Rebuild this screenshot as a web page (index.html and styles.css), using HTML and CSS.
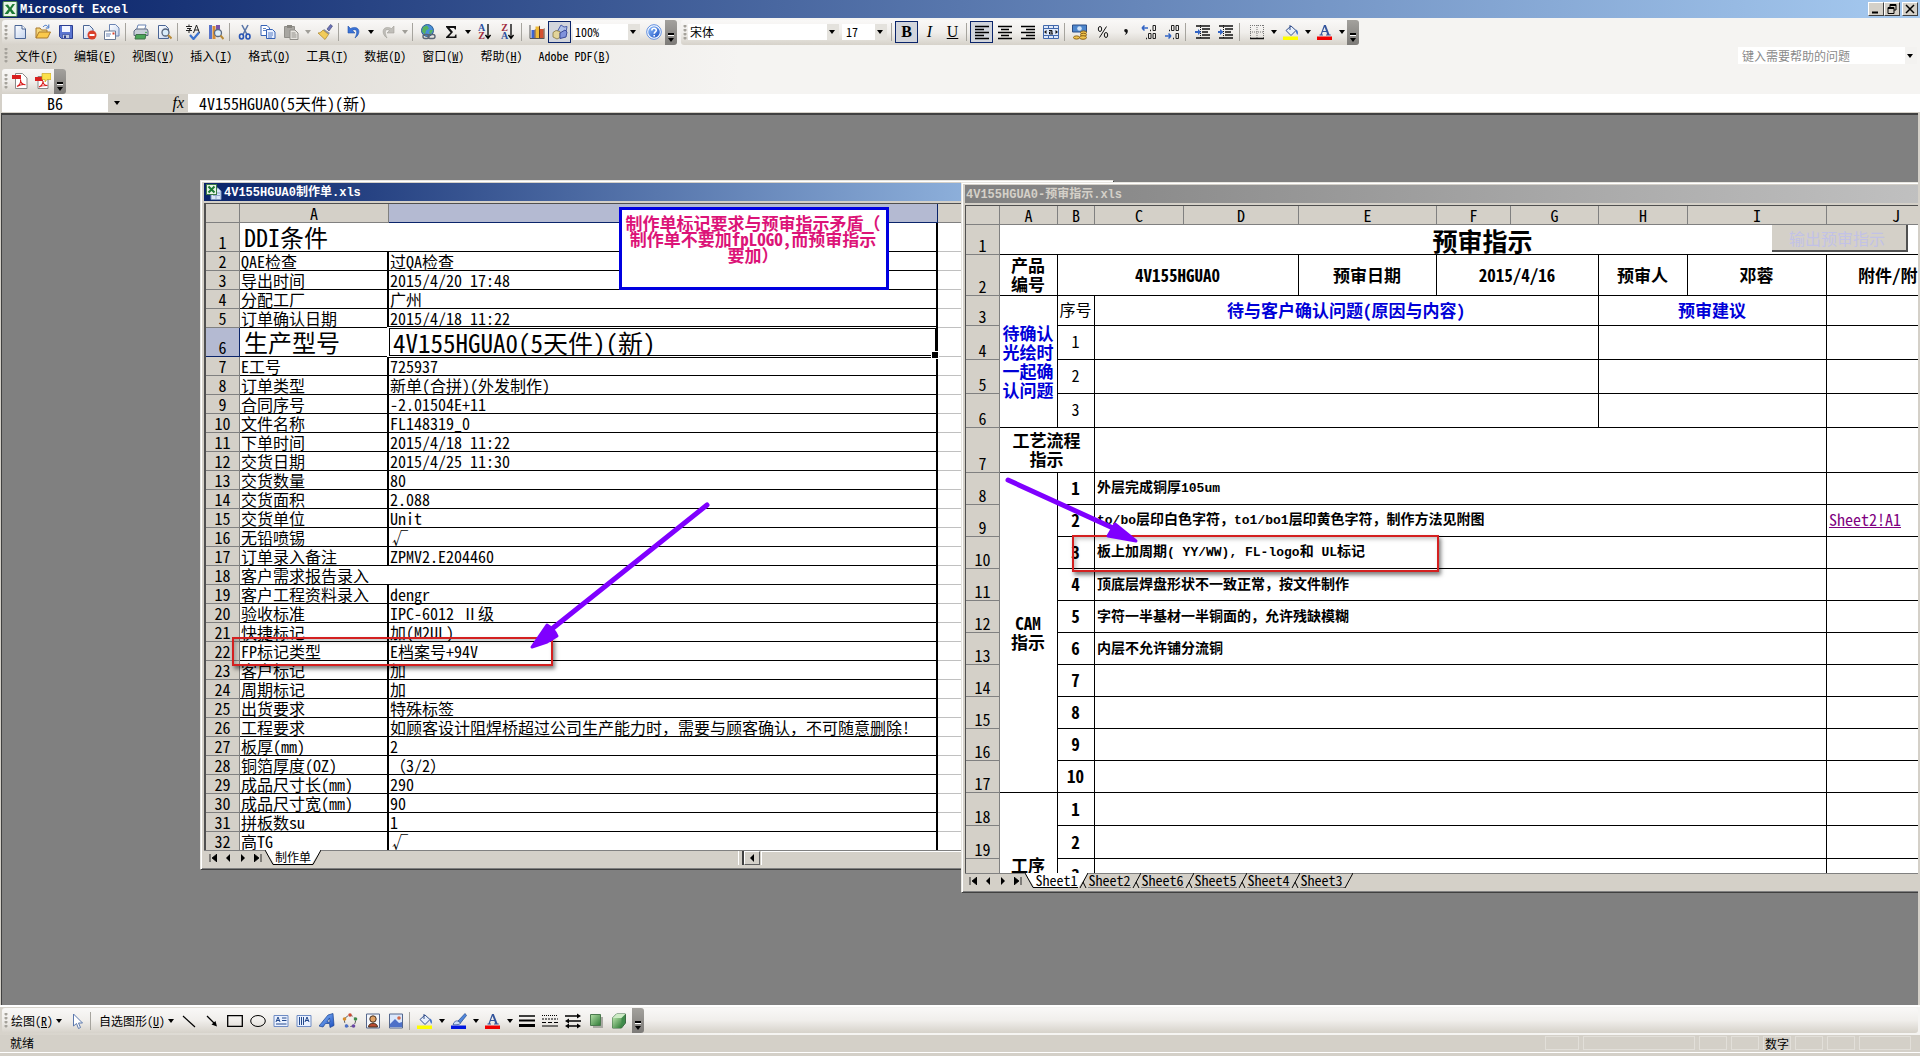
FILE: index.html
```html
<!DOCTYPE html>
<html lang="zh-CN">
<head>
<meta charset="utf-8">
<title>Microsoft Excel</title>
<link rel="stylesheet" href="styles.css">
</head>
<body>
<svg class="defs" aria-hidden="true">
<defs>
<linearGradient id="page" x2="1" y2="1"><stop offset="0" stop-color="#fff"/><stop offset="1" stop-color="#c3d3ee"/></linearGradient>
<linearGradient id="green" x2="1" y2="1"><stop offset="0" stop-color="#b5e0a8"/><stop offset="1" stop-color="#2d7a35"/></linearGradient>
<linearGradient id="blue" x2="1" y2="1"><stop offset="0" stop-color="#8fc0ff"/><stop offset="1" stop-color="#1c4fc0"/></linearGradient>
<symbol id="i-excel" viewBox="0 0 16 16"><rect x="1" y=".5" width="14" height="15" rx="1" fill="#e9f4e6" stroke="#3d7a45"/><path d="M3 4l3-.5 2 3 2.500-3.500H13L9.500 8l4 5h-3.500L8 10l-2 3H2.500L6.500 8z" fill="#1d7a34"/></symbol>
<symbol id="i-book" viewBox="0 0 16 16"><path d="M5 4h7l3 3v8.500H5z" fill="#dbe6f8" stroke="#7d94bd"/><path d="M7 9h7M7 11.500h7M10 7v8" stroke="#93a9cf"/><rect x=".5" y=".5" width="10" height="10" fill="#e9f4e6" stroke="#3d7a45"/><path d="M2.500 2.500l6 6m0-6l-6 6" stroke="#1d7a34" stroke-width="2"/></symbol>
<symbol id="i-new" viewBox="0 0 16 16"><path d="M3 1.500h7l3.500 3.500v9.500H3z" fill="url(#page)" stroke="#4a6595"/><path d="M10 1.500V5h3.500" fill="#fff" stroke="#4a6595"/></symbol>
<symbol id="i-open" viewBox="0 0 16 16"><path d="M1 14V4h4l1.500 2H12v3" fill="#f5d77a" stroke="#a9782a"/><path d="M1 14l3-6h11.500l-3 6z" fill="#fbc94b" stroke="#a9782a"/><path d="M8 3c2-2.500 4-2 5 0m.8-2.500V4h-3" fill="none" stroke="#3b6fc4"/></symbol>
<symbol id="i-save" viewBox="0 0 16 16"><path d="M1.500 1.500h13v13h-11l-2-2z" fill="#5b75d0" stroke="#2c3f91"/><path d="M4 2h8v6H4z" fill="#f3f6ff"/><path d="M4.500 10.500h7v4h-7z" fill="#c3cbe0" stroke="#2c3f91" stroke-width=".6"/><path d="M6 11.500h2V14H6z" fill="#2c3f91"/></symbol>
<symbol id="i-perm" viewBox="0 0 16 16"><path d="M2.500 1.500h6l3.500 3.500v9.500H2.500z" fill="url(#page)" stroke="#4a6595"/><circle cx="11" cy="11" r="4.500" fill="#d9402a"/><path d="M8.500 10h5v2h-5z" fill="#fff"/></symbol>
<symbol id="i-mail" viewBox="0 0 16 16"><path d="M5.500.500h6L15 4v8H5.500z" fill="url(#page)" stroke="#6b84b3"/><path d="M.5 7h11v8.500H.5z" fill="#fff" stroke="#6b7a95"/><path d="M2 10h5M2 12h4" stroke="#6b84b3"/><path d="M8.500 8.500h2v2h-2z" fill="#d9402a"/></symbol>
<symbol id="i-print" viewBox="0 0 16 16"><path d="M5 1h8l-1.500 5h-8z" fill="#fff" stroke="#6b84b3"/><path d="M1 7l2-2h11l1 2v4.500H1z" fill="#c9cfd9" stroke="#5d6b82"/><path d="M3 10.500h10l-1 4.500H2z" fill="#4ba658" stroke="#40704a"/><circle cx="13" cy="8.500" r=".8" fill="#2ea836"/></symbol>
<symbol id="i-preview" viewBox="0 0 16 16"><path d="M2.500 1.500h7l3 3v10h-10z" fill="url(#page)" stroke="#4a6595"/><circle cx="9.500" cy="8.500" r="3.500" fill="#d9ecfa" stroke="#56657d" stroke-width="1.300"/><path d="M12 11l3.500 3.500" stroke="#b98a37" stroke-width="2"/></symbol>
<symbol id="i-spell" viewBox="0 0 16 16"><path d="M1 2.500h6M4 .5v2M2 4.500h4L4 6v3M1 6.500h6M8.500 9L11.500 1 14.500 9M9.500 6h4" fill="none" stroke="#222"/><path d="M5 11l3.500 4L14 8.500" fill="none" stroke="#3c73cf" stroke-width="2.200"/></symbol>
<symbol id="i-research" viewBox="0 0 16 16"><path d="M1 1h3v14H1z" fill="#5873c9"/><path d="M4.500 2h3v13h-3z" fill="#d58b35"/><path d="M8 1h4v9H8z" fill="#7a53a8"/><circle cx="10" cy="9" r="3.500" fill="#dceefa" stroke="#5c6b83" stroke-width="1.300"/><path d="M12.500 11.500l3 3.500" stroke="#b98a37" stroke-width="2"/></symbol>
<symbol id="i-cut" viewBox="0 0 16 16"><path d="M5 1l5 9.500M11 1L6 10.500" stroke="#5b76a8" stroke-width="1.600"/><ellipse cx="4.500" cy="12.500" rx="2" ry="2.500" fill="none" stroke="#2754b5" stroke-width="1.600"/><ellipse cx="11" cy="12.500" rx="2" ry="2.500" fill="none" stroke="#2754b5" stroke-width="1.600"/></symbol>
<symbol id="i-copy" viewBox="0 0 16 16"><path d="M1 1.500h6L9.500 4v7.500H1z" fill="#fff" stroke="#3763b5"/><path d="M6.500 5.500h6l2.500 2.500v6.500H6.500z" fill="#e8f0ff" stroke="#3763b5"/><path d="M3 4.500h3M3 6.500h3M8 9h5M8 11h5M8 13h4" stroke="#3763b5" stroke-width=".8"/></symbol>
<symbol id="i-paste" viewBox="0 0 16 16"><path d="M1.500 2.500h10v11h-10z" fill="#a8a6a1" stroke="#908e89"/><path d="M4 1h5v3H4z" fill="#87857f"/><path d="M7 6h5l3 3v6.500H7z" fill="#e6e4df" stroke="#908e89"/><path d="M8.500 9h4M8.500 11h5M8.500 13h5" stroke="#908e89"/></symbol>
<symbol id="i-brush" viewBox="0 0 16 16"><path d="M10 5l3.500-4.500L15.500 2 12 7z" fill="#6a72b8" stroke="#3a4270" stroke-width=".6"/><path d="M7 5l6 4-1.500 1.500L6 6.500z" fill="#8d93a5"/><path d="M6 6l5.500 4.500L8 15.500 1 9c2 0 4-1.500 5-3z" fill="#f2cc5a" stroke="#a98228" stroke-width=".7"/></symbol>
<symbol id="i-undo" viewBox="0 0 16 16"><path d="M2 2v7h7L6.500 6.500C10 4 12.500 7 9 14 16 9 13 .5 4.500 4.500z" fill="#3a73d8" stroke="#2353a8" stroke-width=".6"/></symbol>
<symbol id="i-redo" viewBox="0 0 16 16"><path d="M14 2v7H7l2.500-2.500C6 4 3.500 7 7 14 0 9 3 .5 11.500 4.500z" fill="#c0beb9" stroke="#a19f99" stroke-width=".6"/></symbol>
<symbol id="i-link" viewBox="0 0 16 16"><circle cx="7.500" cy="6.500" r="6" fill="#4a8fd8" stroke="#2d5f93"/><path d="M3 3l4-1.500 2 3-3 2-1 4-3-3zM10 6l3 0-2 4-2-1z" fill="#57b35d"/><rect x="3" y="10.500" width="6" height="4" rx="2" fill="none" stroke="#5b6675" stroke-width="1.400"/><rect x="8" y="10.500" width="7" height="4" rx="2" fill="none" stroke="#5b6675" stroke-width="1.400"/></symbol>
<symbol id="i-sum" viewBox="0 0 16 16"><path d="M3 2h10v3.500h-1L11 4H6.500L10 8l-4 4.500h5.500l1-2h1V14H3v-1L7.500 8.500 3 3z" fill="#111"/></symbol>
<symbol id="i-chart" viewBox="0 0 16 16"><path d="M1 1v13.500h14.500" fill="none" stroke="#555"/><path d="M2.500 6h3v8h-3z" fill="#3c65cf"/><path d="M6.500 2.500h3.500V14H6.500z" fill="#f0bb36"/><path d="M11 5h3.500v9H11z" fill="#d45030"/><path d="M5.500 6l1-1v9h-1zM10 2.500l1-1V14h-1zM14.500 5l1-1v10h-1z" fill="#653a20"/></symbol>
<symbol id="i-draw" viewBox="0 0 16 16"><path d="M5 8l4-7 3 2 3-.5-1 6-5 2z" fill="#aebfe8" stroke="#4a5da8"/><path d="M1 8.500l3-2 4 1v6l-3 1.500-4-2z" fill="#e3d49a" stroke="#7a6a30" stroke-width=".7"/><path d="M8 9l5-3 2 2-1 5-6 1.500z" fill="#7f92dc" stroke="#3a4a98"/></symbol>
<symbol id="i-help" viewBox="0 0 16 16"><circle cx="8" cy="8" r="7.300" fill="#fff" stroke="#5d8ce0"/><circle cx="8" cy="8" r="5.800" fill="url(#blue)"/><path d="M5.800 6.500C5.800 3.500 10.500 3.600 10.300 6.300 10.200 8 8.200 8 8.200 9.800M8.200 11v1.500" fill="none" stroke="#fff" stroke-width="1.600"/></symbol>
<symbol id="i-left" viewBox="0 0 16 16"><path d="M1 2.500h14M1 5.500h9M1 8.500h14M1 11.500h9M1 14.500h14" stroke="#000" stroke-width="1.300"/></symbol>
<symbol id="i-center" viewBox="0 0 16 16"><path d="M1 2.500h14M4 5.500h8M1 8.500h14M4 11.500h8M1 14.500h14" stroke="#000" stroke-width="1.300"/></symbol>
<symbol id="i-right" viewBox="0 0 16 16"><path d="M1 2.500h14M6 5.500h9M1 8.500h14M6 11.500h9M1 14.500h14" stroke="#000" stroke-width="1.300"/></symbol>
<symbol id="i-merge" viewBox="0 0 16 16"><path d="M.5 1.500h15v13H.5z" fill="#dfe9fa" stroke="#4268ab"/><path d="M.5 4.500h15M.5 11.500h15M5.500 1.500v3M10.500 1.500v3M5.500 11.500v3M10.500 11.500v3" stroke="#4268ab"/><path d="M1 8l2.500-2v4zM15 8l-2.500-2v4z" fill="#111"/><path d="M6 6.500h3v3.500H6.500V8H9m0 2h1" fill="none" stroke="#111"/></symbol>
<symbol id="i-money" viewBox="0 0 16 16"><path d="M.5 1h14v7H.5z" fill="#4d86cc" stroke="#2c4e87"/><circle cx="7.500" cy="4.500" r="2.300" fill="#cfe2f7"/><ellipse cx="11.500" cy="8.500" rx="3" ry="1.600" fill="#f0c34b" stroke="#8e6414"/><ellipse cx="11.500" cy="10.800" rx="3" ry="1.600" fill="#f0c34b" stroke="#8e6414"/><ellipse cx="11" cy="13.500" rx="3.500" ry="1.800" fill="#f0c34b" stroke="#8e6414"/><ellipse cx="4.500" cy="13.500" rx="3" ry="1.600" fill="#f0c34b" stroke="#8e6414"/></symbol>
<symbol id="i-pct" viewBox="0 0 16 16"><ellipse cx="5" cy="5" rx="1.700" ry="2.500" fill="none" stroke="#111"/><ellipse cx="11" cy="11" rx="1.700" ry="2.500" fill="none" stroke="#111"/><path d="M11.500 2.500L4.500 13.500" stroke="#111"/></symbol>
<symbol id="i-comma" viewBox="0 0 16 16"><path d="M6.500 5.500c1.500-1.500 4 0 3.200 2.500-.5 1.800-1.700 2.800-3 3.200 1-1.200 1.300-2 1.200-2.800C6.500 8.500 5.800 6.500 6.500 5.500z" fill="#111"/></symbol>
<symbol id="i-inc" viewBox="0 0 16 16"><path d="M1 4h6M1 4l2.500-2.500M1 4l2.500 2.500" fill="none" stroke="#3365c5" stroke-width="1.500"/><path d="M9 6.500h1M5 14.500h1" stroke="#222" stroke-width="1.500"/><path d="M12 1.500h2.500v5H12zM7.500 9.500H10v5H7.500zM12 9.500h2.500v5H12z" fill="none" stroke="#222"/></symbol>
<symbol id="i-dec" viewBox="0 0 16 16"><path d="M1 12h6M7 12l-2.500-2.500M7 12l-2.500 2.500" fill="none" stroke="#3365c5" stroke-width="1.500"/><path d="M9 14.500h1M5 6.500h1" stroke="#222" stroke-width="1.500"/><path d="M12 9.500h2.500v5H12zM7.500 1.500H10v5H7.500zM12 1.500h2.500v5H12z" fill="none" stroke="#222"/></symbol>
<symbol id="i-outdent" viewBox="0 0 16 16"><path d="M1 2h14M7 5h8M7 8h6M7 11h8M1 14h14" stroke="#111" stroke-width="1.500"/><path d="M5.500 1v14" stroke="#111" stroke-dasharray="1 1"/><path d="M6 8L3 5v2H0v2h3v2z" fill="#3365c5"/></symbol>
<symbol id="i-indent" viewBox="0 0 16 16"><path d="M1 2h14M7 5h8M7 8h6M7 11h8M1 14h14" stroke="#111" stroke-width="1.500"/><path d="M5.500 1v14" stroke="#111" stroke-dasharray="1 1"/><path d="M0 7h2V5l3.500 3L2 11V9H0z" fill="#3365c5"/></symbol>
<symbol id="i-border" viewBox="0 0 16 16"><path d="M1.500 1v13M8 1v13M14.500 1v13M1 1.500h14M1 8h14" stroke="#777" stroke-dasharray="1 1"/><path d="M1 14.500h14" stroke="#111" stroke-width="1.500"/></symbol>
<symbol id="i-fill" viewBox="0 0 16 16"><path d="M3 6.500L8 2l5 4.500-5 5z" fill="#e7effb" stroke="#35508c"/><path d="M7 6V1" stroke="#35508c"/><path d="M13 5.500c2 1 2.500 3 1.500 5.500-1-1-2-3-1.500-5.500z" fill="#3f74cf"/><path d="M0 12.500h15V16H0z" fill="#fefe00"/></symbol>
<symbol id="i-color" viewBox="0 0 16 16"><path d="M2.500 10.500h1L7 1h1.800l3.700 9.500h1.200v1H9v-1h1.200L9.400 8H5.700l-.9 2.500H6v1H2.500zM6 7h3L7.600 3z" fill="#34559c"/><path d="M0 12.500h15V16H0z" fill="#f00000"/></symbol>
<symbol id="i-pen" viewBox="0 0 16 16"><path d="M7 8l7-7.500 1.500 2L9.500 10z" fill="#4f86dc" stroke="#23498c" stroke-width=".7"/><path d="M2 11.500c1-3 3-4 5-3.500l2.500 2c0 1.500-4 2-7.500 1.500z" fill="#c9dcf8" stroke="#23498c" stroke-width=".7"/><path d="M0 12.500h15V16H0z" fill="#0018e0"/></symbol>
<symbol id="i-pdf" viewBox="0 0 16 16"><path d="M3.500.500h7L15 5v10.500H3.500z" fill="#fff" stroke="#888"/><path d="M0 2h9v4H0z" fill="#d91f1f"/><path d="M5 13.500c3-2 4-5 3.500-7 0 3 2 5 5 5.200-3-.5-6 .3-8.500 1.800z" fill="none" stroke="#d91f1f" stroke-width="1.100"/></symbol>
<symbol id="i-pdfmail" viewBox="0 0 16 16"><path d="M3 3.500h10v12H3z" fill="#fff" stroke="#888"/><path d="M0 4h8v4H0z" fill="#d91f1f"/><path d="M7 .5h9v6h-4L10 9V6.500H7z" fill="#fbe04a" stroke="#c19c12" stroke-width=".6"/><path d="M4 14c3-1.500 4-4 4-6 0 3 2 4.500 4.500 4.500-3 0-6 0-8.500 1.500z" fill="none" stroke="#d91f1f" stroke-width="1.100"/></symbol>
<symbol id="i-cursor" viewBox="0 0 16 16"><path d="M4.500 1v12l3-2.500 2 5 2-1-2-4.500h4z" fill="#fff" stroke="#5b78ad"/></symbol>
<symbol id="i-line" viewBox="0 0 16 16"><path d="M2 3l12 11" stroke="#000" stroke-width="1.200"/></symbol>
<symbol id="i-arrow" viewBox="0 0 16 16"><path d="M3 3l8 8" stroke="#000" stroke-width="1.300"/><path d="M13 13.500L7.500 11.500 11.500 8z" fill="#000"/></symbol>
<symbol id="i-rect" viewBox="0 0 16 16"><path d="M.7 2.700h14.600v10.600H.7z" fill="none" stroke="#000" stroke-width="1.300"/></symbol>
<symbol id="i-oval" viewBox="0 0 16 16"><ellipse cx="8" cy="8" rx="7.300" ry="5.500" fill="none" stroke="#000"/></symbol>
<symbol id="i-text" viewBox="0 0 16 16"><path d="M1 2.500h14v11H1z" fill="#eaf1ff" stroke="#6f8cc4"/><path d="M3 9l2-5 2 5M3.500 7.500h3M9 5h4.500M9 7.500h4.500M3 11h10.500" fill="none" stroke="#23498c"/></symbol>
<symbol id="i-vtext" viewBox="0 0 16 16"><path d="M1 2.500h14v11H1z" fill="#eaf1ff" stroke="#6f8cc4"/><path d="M3.500 4v8M5.500 4v8M7.500 4v8M9 9l2-5 2 5M9.500 7.500h3" fill="none" stroke="#23498c"/></symbol>
<symbol id="i-art" viewBox="0 0 16 16"><path d="M0 13l9-11 5-1.500 1 12-4 2-.5-4H6.500L4 14zM8 9h3l-.5-4z" fill="url(#blue)" stroke="#17408f" stroke-width=".7"/></symbol>
<symbol id="i-org" viewBox="0 0 16 16"><circle cx="8" cy="8" r="5.500" fill="none" stroke="#555" stroke-dasharray="3 2"/><circle cx="8" cy="2" r="1.800" fill="#c94b36"/><circle cx="2.500" cy="6" r="1.800" fill="#d68c2c"/><circle cx="13.500" cy="6" r="1.800" fill="#3f8b4b"/><circle cx="4.500" cy="13" r="1.800" fill="#4d70c8"/><circle cx="11.500" cy="13" r="1.800" fill="#6846a4"/></symbol>
<symbol id="i-clip" viewBox="0 0 16 16"><path d="M1.500 1h13v14h-13z" fill="#f4f6fb" stroke="#54678d"/><circle cx="8" cy="6" r="3.200" fill="#e0a165" stroke="#473020"/><path d="M3.500 14c0-5 9-5 9 0z" fill="#b94a2f" stroke="#473020"/></symbol>
<symbol id="i-pic" viewBox="0 0 16 16"><path d="M1.500 1h13v14h-13z" fill="#dbe8fc" stroke="#54678d"/><path d="M2 14V11l5-5 4 4 3-1v5z" fill="#4d70c8"/><circle cx="11" cy="5" r="1.800" fill="#d2694a"/></symbol>
<symbol id="i-lines" viewBox="0 0 16 16"><path d="M0 3h16" stroke="#000" stroke-width="1.500"/><path d="M0 7.500h16" stroke="#000" stroke-width="2"/><path d="M0 12.500h16" stroke="#000" stroke-width="3"/></symbol>
<symbol id="i-dash" viewBox="0 0 16 16"><path d="M0 2.500h16" stroke="#000" stroke-dasharray="1 1"/><path d="M0 6h16" stroke="#000" stroke-dasharray="2 1"/><path d="M0 9.500h16" stroke="#000" stroke-dasharray="4 2"/><path d="M0 13h16" stroke="#000"/></symbol>
<symbol id="i-arrows" viewBox="0 0 16 16"><path d="M0 3h13M3 8h13M3 13h10" stroke="#000" stroke-width="1.300"/><path d="M16 3l-4-2.500v5zM0 8l4-2.500v5zM0 13l4-2.500v5zM16 13l-4-2.500v5z"/></symbol>
<symbol id="i-shadow" viewBox="0 0 16 16"><path d="M5 4h10v11H5z" fill="#a9a9a3"/><path d="M2.500 1.500h10v11h-10z" fill="url(#green)" stroke="#4a7a4e"/></symbol>
<symbol id="i-cube" viewBox="0 0 16 16"><path d="M1.500 5l4-4h9v9l-4 5h-9z" fill="#3f8b4b" stroke="#3c6b42"/><path d="M1.500 5h9v10h-9z" fill="url(#green)"/><path d="M1.500 5l4-4h9l-4 4z" fill="#cdebc5"/></symbol>
</defs>
</svg>

<header class="titlebar">
  <svg class="ico"><use href="#i-excel"/></svg>
  <h1>Microsoft Excel</h1>
  <div class="winbtns">
    <button aria-label="最小化"><svg viewBox="0 0 10 10"><path d="M1 8.500h6" stroke="#000" stroke-width="2"/></svg></button>
    <button aria-label="还原"><svg viewBox="0 0 10 10"><path d="M3 3V.5h6V6H7M3 1.500h6M1 3.500h6v6H1zM1 4.500h6" fill="none" stroke="#000"/></svg></button>
    <button class="close" aria-label="关闭"><svg viewBox="0 0 10 10"><path d="M1 1l8 8M9 1L1 9" stroke="#000" stroke-width="1.500"/></svg></button>
  </div>
</header>

<div class="bars">
  <div class="row">
    <div class="toolbar">
      <i class="grip"></i>
      <button class="tb" aria-label="新建"><svg class="ico"><use href="#i-new"/></svg></button>
      <button class="tb" aria-label="打开"><svg class="ico"><use href="#i-open"/></svg></button>
      <button class="tb" aria-label="保存"><svg class="ico"><use href="#i-save"/></svg></button>
      <button class="tb" aria-label="权限"><svg class="ico"><use href="#i-perm"/></svg></button>
      <button class="tb" aria-label="电子邮件"><svg class="ico"><use href="#i-mail"/></svg></button>
      <i class="sep"></i>
      <button class="tb" aria-label="打印"><svg class="ico"><use href="#i-print"/></svg></button>
      <button class="tb" aria-label="打印预览"><svg class="ico"><use href="#i-preview"/></svg></button>
      <i class="sep"></i>
      <button class="tb" aria-label="拼写检查"><svg class="ico"><use href="#i-spell"/></svg></button>
      <button class="tb" aria-label="信息检索"><svg class="ico"><use href="#i-research"/></svg></button>
      <i class="sep"></i>
      <button class="tb" aria-label="剪切"><svg class="ico"><use href="#i-cut"/></svg></button>
      <button class="tb" aria-label="复制"><svg class="ico"><use href="#i-copy"/></svg></button>
      <button class="tb" aria-label="粘贴"><svg class="ico"><use href="#i-paste"/></svg></button>
      <button class="drop off" aria-label="粘贴选项"></button>
      <button class="tb" aria-label="格式刷"><svg class="ico"><use href="#i-brush"/></svg></button>
      <i class="sep"></i>
      <button class="tb" aria-label="撤消"><svg class="ico"><use href="#i-undo"/></svg></button>
      <button class="drop" aria-label="撤消列表"></button>
      <button class="tb" aria-label="恢复"><svg class="ico"><use href="#i-redo"/></svg></button>
      <button class="drop off" aria-label="恢复列表"></button>
      <i class="sep"></i>
      <button class="tb" aria-label="超链接"><svg class="ico"><use href="#i-link"/></svg></button>
      <button class="tb" aria-label="自动求和"><svg class="ico"><use href="#i-sum"/></svg></button>
      <button class="drop" aria-label="求和选项"></button>
      <button class="tb sort" aria-label="升序排序"><span><b class="az">A</b><b class="za">Z</b></span><svg viewBox="0 0 6 16"><path d="M3 0v14M.5 11L3 14.500 5.500 11" fill="none" stroke="#000" stroke-width="1.300"/></svg></button>
      <button class="tb sort" aria-label="降序排序"><span><b class="za">Z</b><b class="az">A</b></span><svg viewBox="0 0 6 16"><path d="M3 0v14M.5 11L3 14.500 5.500 11" fill="none" stroke="#000" stroke-width="1.300"/></svg></button>
      <i class="sep"></i>
      <button class="tb" aria-label="图表向导"><svg class="ico"><use href="#i-chart"/></svg></button>
      <button class="tb on" aria-label="绘图"><svg class="ico"><use href="#i-draw"/></svg></button>
      <span class="combo zoom"><select aria-label="显示比例"><option>100%</option></select></span>
      <button class="tb" aria-label="帮助"><svg class="ico"><use href="#i-help"/></svg></button>
      <button class="cap" aria-label="工具栏选项"></button>
    </div>
    <div class="toolbar">
      <i class="grip"></i>
      <span class="combo font"><select aria-label="字体"><option>宋体</option></select></span>
      <span class="combo size"><select aria-label="字号"><option>17</option></select></span>
      <i class="sep"></i>
      <button class="tb on letter"><b>B</b></button>
      <button class="tb letter"><em>I</em></button>
      <button class="tb letter"><u>U</u></button>
      <i class="sep"></i>
      <button class="tb on" aria-label="左对齐"><svg class="ico"><use href="#i-left"/></svg></button>
      <button class="tb" aria-label="居中"><svg class="ico"><use href="#i-center"/></svg></button>
      <button class="tb" aria-label="右对齐"><svg class="ico"><use href="#i-right"/></svg></button>
      <button class="tb" aria-label="合并及居中"><svg class="ico"><use href="#i-merge"/></svg></button>
      <i class="sep"></i>
      <button class="tb" aria-label="货币样式"><svg class="ico"><use href="#i-money"/></svg></button>
      <button class="tb" aria-label="百分比样式"><svg class="ico"><use href="#i-pct"/></svg></button>
      <button class="tb" aria-label="千位分隔样式"><svg class="ico"><use href="#i-comma"/></svg></button>
      <button class="tb" aria-label="增加小数位数"><svg class="ico"><use href="#i-inc"/></svg></button>
      <button class="tb" aria-label="减少小数位数"><svg class="ico"><use href="#i-dec"/></svg></button>
      <i class="sep wide"></i>
      <button class="tb" aria-label="减少缩进量"><svg class="ico"><use href="#i-outdent"/></svg></button>
      <button class="tb" aria-label="增加缩进量"><svg class="ico"><use href="#i-indent"/></svg></button>
      <i class="sep wide"></i>
      <button class="tb" aria-label="边框"><svg class="ico"><use href="#i-border"/></svg></button>
      <button class="drop" aria-label="边框选项"></button>
      <button class="tb" aria-label="填充颜色"><svg class="ico"><use href="#i-fill"/></svg></button>
      <button class="drop" aria-label="填充颜色选项"></button>
      <button class="tb" aria-label="字体颜色"><svg class="ico"><use href="#i-color"/></svg></button>
      <button class="drop" aria-label="字体颜色选项"></button>
      <button class="cap" aria-label="工具栏选项"></button>
    </div>
  </div>
  <nav class="menu">
    <i class="grip"></i>
    <button>文件(<u>F</u>)</button><button>编辑(<u>E</u>)</button><button>视图(<u>V</u>)</button><button>插入(<u>I</u>)</button><button>格式(<u>O</u>)</button><button>工具(<u>T</u>)</button><button>数据(<u>D</u>)</button><button>窗口(<u>W</u>)</button><button>帮助(<u>H</u>)</button><button>Adobe PDF(<u>B</u>)</button>
    <span class="combo ask"><input type="text" placeholder="键入需要帮助的问题" aria-label="键入需要帮助的问题"></span>
  </nav>
  <div class="row">
    <div class="toolbar">
      <i class="grip"></i>
      <button class="tb" aria-label="转换为 Adobe PDF"><svg class="ico"><use href="#i-pdf"/></svg></button>
      <button class="tb" aria-label="转换并发送审阅"><svg class="ico"><use href="#i-pdfmail"/></svg></button>
      <button class="cap" aria-label="工具栏选项"></button>
    </div>
  </div>
</div>

<div class="formula">
  <input class="namebox" type="text" value="B6" aria-label="名称框">
  <button class="drop" aria-label="名称列表"></button>
  <button class="fx" aria-label="插入函数"><em>fx</em></button>
  <input class="fbar" type="text" value="4V155HGUA0(5天件)(新)" aria-label="编辑栏">
</div>

<main class="workspace">
  <section class="window w1">
    <header class="wtitle"><svg class="ico"><use href="#i-book"/></svg><h2>4V155HGUA0制作单.xls</h2></header>
    <div class="pane">
      <table class="sheet s1">
        <colgroup><col class="rh"><col class="ca"><col class="cb"><col class="cc"></colgroup>
        <tr class="heads"><th></th><th>A</th><th class="sel"></th><th></th></tr>
        <tr class="tall"><th>1</th><td colspan="2" class="big end">DDI条件</td><td></td></tr>
        <tr><th>2</th><td>QAE检查</td><td>过QA检查</td><td></td></tr>
        <tr><th>3</th><td>导出时间</td><td>2015/4/20 17:48</td><td></td></tr>
        <tr><th>4</th><td>分配工厂</td><td>广州</td><td></td></tr>
        <tr><th>5</th><td>订单确认日期</td><td>2015/4/18 11:22</td><td></td></tr>
        <tr class="tall"><th class="sel">6</th><td class="big">生产型号</td><td class="big cur">4V155HGUA0(5天件)(新)<i class="selbox"></i></td><td></td></tr>
        <tr><th>7</th><td>E工号</td><td>725937</td><td></td></tr>
        <tr><th>8</th><td>订单类型</td><td>新单(合拼)(外发制作)</td><td></td></tr>
        <tr><th>9</th><td>合同序号</td><td>-2.01504E+11</td><td></td></tr>
        <tr><th>10</th><td>文件名称</td><td>FL148319_0</td><td></td></tr>
        <tr><th>11</th><td>下单时间</td><td>2015/4/18 11:22</td><td></td></tr>
        <tr><th>12</th><td>交货日期</td><td>2015/4/25 11:30</td><td></td></tr>
        <tr><th>13</th><td>交货数量</td><td>80</td><td></td></tr>
        <tr><th>14</th><td>交货面积</td><td>2.088</td><td></td></tr>
        <tr><th>15</th><td>交货单位</td><td>Unit</td><td></td></tr>
        <tr><th>16</th><td>无铅喷锡</td><td class="tick">√</td><td></td></tr>
        <tr><th>17</th><td>订单录入备注</td><td>ZPMV2.E204460</td><td></td></tr>
        <tr><th>18</th><td colspan="2" class="end">客户需求报告录入</td><td></td></tr>
        <tr><th>19</th><td>客户工程资料录入</td><td>dengr</td><td></td></tr>
        <tr><th>20</th><td>验收标准</td><td>IPC-6012 Ⅱ级</td><td></td></tr>
        <tr><th>21</th><td>快捷标记</td><td>加(M2UL)</td><td></td></tr>
        <tr><th>22</th><td>FP标记类型</td><td>E档案号+94V</td><td></td></tr>
        <tr><th>23</th><td>客户标记</td><td>加</td><td></td></tr>
        <tr><th>24</th><td>周期标记</td><td>加</td><td></td></tr>
        <tr><th>25</th><td>出货要求</td><td>特殊标签</td><td></td></tr>
        <tr><th>26</th><td>工程要求</td><td>如顾客设计阻焊桥超过公司生产能力时，需要与顾客确认，不可随意删除!</td><td></td></tr>
        <tr><th>27</th><td>板厚(mm)</td><td>2</td><td></td></tr>
        <tr><th>28</th><td>铜箔厚度(OZ)</td><td>（3/2）</td><td></td></tr>
        <tr><th>29</th><td>成品尺寸长(mm)</td><td>290</td><td></td></tr>
        <tr><th>30</th><td>成品尺寸宽(mm)</td><td>90</td><td></td></tr>
        <tr><th>31</th><td>拼板数su</td><td>1</td><td></td></tr>
        <tr><th>32</th><td>高TG</td><td class="tick">√</td><td></td></tr>
      </table>
    </div>
    <footer class="tabs">
      <button class="nav" aria-label="第一张"><svg viewBox="0 0 8 8"><path d="M1 0v8M8 0L3 4l5 4z" stroke="#000" stroke-width=".8"/></svg></button>
      <button class="nav" aria-label="上一张"><svg viewBox="0 0 8 8"><path d="M6 0L2 4l4 4z"/></svg></button>
      <button class="nav" aria-label="下一张"><svg viewBox="0 0 8 8"><path d="M2 0l4 4-4 4z"/></svg></button>
      <button class="nav" aria-label="最后一张"><svg viewBox="0 0 8 8"><path d="M7 0v8M0 0l5 4-5 4z" stroke="#000" stroke-width=".8"/></svg></button>
      <button class="tab active"><svg class="edge" viewBox="0 0 10 15"><path d="M10 0v15L0 0z" fill="#fff"/><path d="M0 0l8 14.500h2" fill="none" stroke="#000"/></svg><span>制作单</span><svg class="edge" viewBox="0 0 10 15"><path d="M0 0v15L10 0z" fill="#fff"/><path d="M10 0L2 14.500H0" fill="none" stroke="#000"/></svg></button>
      <div class="hscroll"><i class="split"></i><button aria-label="向左滚动"><svg viewBox="0 0 8 8"><path d="M6 0L2 4l4 4z"/></svg></button><i class="track"></i></div>
    </footer>
    <div class="callout">制作单标记要求与预审指示矛盾（<br>制作单不要加fpLOGO,而预审指示<br>要加）</div>
  </section>

  <section class="window w2">
    <header class="wtitle"><h2>4V155HGUA0-预审指示.xls</h2></header>
    <div class="pane">
      <table class="sheet s2">
        <colgroup><col class="rh"><col class="a"><col class="b"><col class="c"><col class="d"><col class="e"><col class="f"><col class="g"><col class="h"><col class="i"><col class="j"></colgroup>
        <tr class="heads"><th></th><th>A</th><th>B</th><th>C</th><th>D</th><th>E</th><th>F</th><th>G</th><th>H</th><th>I</th><th>J</th></tr>
        <tr class="r30"><th>1</th><td colspan="10" class="title">预审指示</td></tr>
        <tr class="r40"><th>2</th><td>产品<br>编号</td><td colspan="3">4V155HGUA0</td><td>预审日期</td><td colspan="2">2015/4/16</td><td>预审人</td><td>邓蓉</td><td class="attach">附件/附</td></tr>
        <tr class="r30"><th>3</th><td rowspan="4" class="blue">待确认<br>光绘时<br>一起确<br>认问题</td><td class="thin">序号</td><td colspan="5" class="blue">待与客户确认问题(原因与内容)</td><td colspan="2" class="blue">预审建议</td><td></td></tr>
        <tr class="r34"><th>4</th><td class="thin">1</td><td colspan="5"></td><td colspan="2"></td><td></td></tr>
        <tr class="r34"><th>5</th><td class="thin">2</td><td colspan="5"></td><td colspan="2"></td><td></td></tr>
        <tr class="r34"><th>6</th><td class="thin">3</td><td colspan="5"></td><td colspan="2"></td><td></td></tr>
        <tr class="r45"><th>7</th><td colspan="2">工艺流程<br>指示</td><td colspan="7"></td><td></td></tr>
        <tr class="r32"><th>8</th><td rowspan="10">CAM<br>指示</td><td>1</td><td colspan="7" class="note">外层完成铜厚<span>105um</span></td><td></td></tr>
        <tr class="r32"><th>9</th><td>2</td><td colspan="7" class="note"><span>to/bo</span>层印白色字符，<span>to1/bo1</span>层印黄色字符，制作方法见附图</td><td class="link"><a href="#Sheet2">Sheet2!A1</a></td></tr>
        <tr class="r32"><th>10</th><td>3</td><td colspan="7" class="note">板上加周期<span>( YY/WW), FL-logo</span>和<span> UL</span>标记</td><td></td></tr>
        <tr class="r32"><th>11</th><td>4</td><td colspan="7" class="note">顶底层焊盘形状不一致正常，按文件制作</td><td></td></tr>
        <tr class="r32"><th>12</th><td>5</td><td colspan="7" class="note">字符一半基材一半铜面的，允许残缺模糊</td><td></td></tr>
        <tr class="r32"><th>13</th><td>6</td><td colspan="7" class="note">内层不允许铺分流铜</td><td></td></tr>
        <tr class="r32"><th>14</th><td>7</td><td colspan="7"></td><td></td></tr>
        <tr class="r32"><th>15</th><td>8</td><td colspan="7"></td><td></td></tr>
        <tr class="r32"><th>16</th><td>9</td><td colspan="7"></td><td></td></tr>
        <tr class="r32"><th>17</th><td>10</td><td colspan="7"></td><td></td></tr>
        <tr class="r33"><th>18</th><td rowspan="3" class="proc">工序</td><td>1</td><td colspan="7"></td><td></td></tr>
        <tr class="r33"><th>19</th><td>2</td><td colspan="7"></td><td></td></tr>
        <tr class="r34"><th></th><td>3</td><td colspan="7"></td><td></td></tr>
      </table>
      <button class="export">输出预审指示</button>
    </div>
    <footer class="tabs">
      <button class="nav" aria-label="第一张"><svg viewBox="0 0 8 8"><path d="M1 0v8M8 0L3 4l5 4z" stroke="#000" stroke-width=".8"/></svg></button>
      <button class="nav" aria-label="上一张"><svg viewBox="0 0 8 8"><path d="M6 0L2 4l4 4z"/></svg></button>
      <button class="nav" aria-label="下一张"><svg viewBox="0 0 8 8"><path d="M2 0l4 4-4 4z"/></svg></button>
      <button class="nav" aria-label="最后一张"><svg viewBox="0 0 8 8"><path d="M7 0v8M0 0l5 4-5 4z" stroke="#000" stroke-width=".8"/></svg></button>
      <button class="tab active"><svg class="edge" viewBox="0 0 10 15"><path d="M10 0v15L0 0z" fill="#fff"/><path d="M0 0l8 14.500h2" fill="none" stroke="#000"/></svg><span>Sheet1</span></button>
      <button class="tab"><svg class="edge" viewBox="0 0 10 15"><path d="M0 0v15L10 0z" fill="#fff"/><path d="M10 0L2 15M5 9l3 6" fill="none" stroke="#000"/></svg><span>Sheet2</span></button>
      <button class="tab"><svg class="edge" viewBox="0 0 10 15"><path d="M10 0L2 15M5 9l3 6" fill="none" stroke="#000"/></svg><span>Sheet6</span></button>
      <button class="tab"><svg class="edge" viewBox="0 0 10 15"><path d="M10 0L2 15M5 9l3 6" fill="none" stroke="#000"/></svg><span>Sheet5</span></button>
      <button class="tab"><svg class="edge" viewBox="0 0 10 15"><path d="M10 0L2 15M5 9l3 6" fill="none" stroke="#000"/></svg><span>Sheet4</span></button>
      <button class="tab"><svg class="edge" viewBox="0 0 10 15"><path d="M10 0L2 15M5 9l3 6" fill="none" stroke="#000"/></svg><span>Sheet3</span></button>
      <svg class="edge" viewBox="0 0 10 15"><path d="M10 0L2 15H0" fill="none" stroke="#000"/></svg>
    </footer>
  </section>

  <div class="mark m1"></div>
  <div class="mark m2"></div>
  <svg class="arrows" viewBox="0 0 1200 600" aria-hidden="true">
    <g fill="#7f00ff" stroke="#7f00ff" stroke-linecap="round" stroke-linejoin="round">
      <path d="M707 392L553 515" stroke-width="5"/>
      <path d="M532 534l15-22q7 4 10 11l-10 6z" stroke-width="3"/>
      <path d="M1008 367l105 48" stroke-width="5"/>
      <path d="M1136 428l-21-17-7 12z" stroke-width="3"/>
    </g>
  </svg>
</main>

<div class="drawrow">
  <div class="toolbar">
    <i class="grip"></i>
    <button class="txt">绘图(<u>R</u>)</button><button class="drop" aria-label="绘图菜单"></button>
    <button class="tb" aria-label="选择对象"><svg class="ico"><use href="#i-cursor"/></svg></button>
    <i class="sep"></i>
    <button class="txt">自选图形(<u>U</u>)</button><button class="drop" aria-label="自选图形菜单"></button>
    <button class="tb" aria-label="直线"><svg class="ico"><use href="#i-line"/></svg></button>
    <button class="tb" aria-label="箭头"><svg class="ico"><use href="#i-arrow"/></svg></button>
    <button class="tb" aria-label="矩形"><svg class="ico"><use href="#i-rect"/></svg></button>
    <button class="tb" aria-label="椭圆"><svg class="ico"><use href="#i-oval"/></svg></button>
    <button class="tb" aria-label="文本框"><svg class="ico"><use href="#i-text"/></svg></button>
    <button class="tb" aria-label="竖排文本框"><svg class="ico"><use href="#i-vtext"/></svg></button>
    <button class="tb" aria-label="艺术字"><svg class="ico"><use href="#i-art"/></svg></button>
    <button class="tb" aria-label="组织结构图"><svg class="ico"><use href="#i-org"/></svg></button>
    <button class="tb" aria-label="剪贴画"><svg class="ico"><use href="#i-clip"/></svg></button>
    <button class="tb" aria-label="图片"><svg class="ico"><use href="#i-pic"/></svg></button>
    <i class="sep"></i>
    <button class="tb" aria-label="填充颜色"><svg class="ico"><use href="#i-fill"/></svg></button>
    <button class="drop" aria-label="填充选项"></button>
    <button class="tb" aria-label="线条颜色"><svg class="ico"><use href="#i-pen"/></svg></button>
    <button class="drop" aria-label="线条选项"></button>
    <button class="tb" aria-label="字体颜色"><svg class="ico"><use href="#i-color"/></svg></button>
    <button class="drop" aria-label="字体颜色选项"></button>
    <button class="tb" aria-label="线型"><svg class="ico"><use href="#i-lines"/></svg></button>
    <button class="tb" aria-label="虚线线型"><svg class="ico"><use href="#i-dash"/></svg></button>
    <button class="tb" aria-label="箭头样式"><svg class="ico"><use href="#i-arrows"/></svg></button>
    <button class="tb" aria-label="阴影样式"><svg class="ico"><use href="#i-shadow"/></svg></button>
    <button class="tb" aria-label="三维效果样式"><svg class="ico"><use href="#i-cube"/></svg></button>
    <button class="cap" aria-label="工具栏选项"></button>
  </div>
</div>
<footer class="status">
  <span class="ready">就绪</span>
  <i class="p34"></i><i class="p112"></i><i class="p28"></i><i class="p28"></i><span class="p28">数字</span><i class="p28"></i><i class="p28"></i><i class="p52"></i>
</footer>
</body>
</html>
```
FILE: styles.css
```css
* { box-sizing: border-box; }
body {
  margin: 0; min-height: 100vh; display: flex; flex-direction: column;
  background: #d4d0c8; color: #000; overflow-x: hidden;
  font: 12px/16px "Noto Sans Mono CJK SC", "Noto Sans CJK SC", "Liberation Mono", monospace;
}
button, input, select { font: inherit; color: inherit; border: 0; padding: 0; margin: 0; background: none; border-radius: 0; }
h1, h2 { margin: 0; font-size: 12px; line-height: 16px; font-weight: bold; }
.defs { position: absolute; width: 0; height: 0; }
.ico { width: 16px; height: 16px; display: block; flex: none; }

.titlebar { height: 18px; display: flex; align-items: center; gap: 2px; padding: 0 2px; color: #fff; background: linear-gradient(90deg, #0a246a, #a6caf0); }
.titlebar h1, .wtitle h2 { font-family: "Liberation Mono", "Noto Sans CJK SC", monospace; padding-top: 2px; }
.winbtns { margin-left: auto; display: flex; }
.winbtns button { width: 16px; height: 14px; background: #d4d0c8; border: 1px solid; border-color: #fff #404040 #404040 #fff; display: flex; align-items: center; justify-content: center; }
.winbtns .close { margin-left: 2px; }
.winbtns svg { width: 10px; height: 10px; }

.bars { background: linear-gradient(90deg, #d7d3cb, #f5f4f2 740px); height: 76px; padding-top: 2px; display: flex; flex-direction: column; }
.row { display: flex; gap: 4px; padding-left: 2px; height: 25px; }
.toolbar { display: flex; align-items: center; height: 25px; border-radius: 3px; background: linear-gradient(#f9f8f7, #f0eeeb 50%, #d6d2ca); }
.row .toolbar { padding-bottom: 1px; }
.grip { width: 6px; height: 15px; flex: none; background: radial-gradient(circle at 4px 1px, #a5a29b 1px, transparent 2px) 0 0 / 6px 4px; }
.sep { width: 6px; height: 18px; flex: none; background: linear-gradient(#a6a49e, #a6a49e) 2px 0 / 1px 100% no-repeat; }
.sep.wide { width: 8px; }
.tb { width: 23px; height: 22px; flex: none; display: flex; align-items: center; justify-content: center; }
.tb.on { background: #d2d5dc; border: 1px solid #0a246a; }
.drop { width: 11px; height: 22px; flex: none; display: flex; align-items: center; justify-content: center; }
.drop::after, .combo::after { content: ""; border: 3px solid transparent; border-top: 4px solid #000; border-bottom: 0; }
.drop.off::after { border-top-color: #a09e98; }
.cap { width: 12px; height: 25px; flex: none; align-self: flex-start; border-radius: 0 3px 3px 0; background: linear-gradient(#a3a19d, #7d7b78); display: flex; flex-direction: column; align-items: center; justify-content: flex-end; gap: 2px; padding-bottom: 3px; }
.cap::before { content: ""; width: 6px; height: 2px; background: #000; border-bottom: 1px solid #fff; }
.cap::after { content: ""; border: 3px solid transparent; border-top: 4px solid #000; border-bottom: 0; }
.combo { display: flex; align-items: center; height: 16px; padding-right: 4px; background: linear-gradient(90deg, transparent calc(100% - 12px), #e4e2dd 0) #fff; }
.combo select, .combo input { flex: 1; min-width: 0; width: 100%; height: 16px; padding: 0 4px; appearance: none; outline: 0; line-height: 16px; }
.row .combo { padding-bottom: 1px; }
.zoom { width: 67px; margin-left: 2px; margin-right: 2px; }
.font { width: 151px; margin: 0 3px 0 1px; }
.size { width: 45px; margin-right: 2px; }
.combo.zoom select, .combo.font select { padding-left: 2px; }
.letter { font: 16px/20px "Liberation Serif", serif; }
.sort span { display: flex; flex-direction: column; font: bold 10px/8px "Liberation Serif", serif; }
.sort svg { width: 6px; height: 16px; }
.az { color: #2b4f9e; } .za { color: #a02b3d; }

.menu { display: flex; align-items: center; height: 24px; padding: 0 0 3px 2px; }
.menu .grip { margin-right: 8px; }
.menu button { margin-right: 16px; white-space: nowrap; }
.ask { width: 179px; height: 17px; margin: 0 3px 0 auto; background: linear-gradient(90deg, transparent calc(100% - 12px), #f3f2f0 0) #fff; }
.ask input::placeholder { color: #8a8a8a; opacity: 1; }

.formula { display: flex; height: 19px; padding: 0 0 1px 2px; font-size: 16px; line-height: 18px; }
.formula input { background: #fff; height: 18px; outline: 0; }
.namebox { width: 106px; text-align: center; }
.formula .drop { width: 17px; height: 18px; }
.fx { width: 63px; text-align: right; padding-right: 4px; font: 16px/18px "Liberation Serif", serif; }
.fbar { flex: 1; min-width: 0; padding: 0 0 0 11px; }

.workspace { flex: 1; min-height: 780px; position: relative; overflow: hidden; background: #808080; border-right: 2px solid #d4d0c8; box-shadow: inset 1px 0 #d4d0c8, inset 2px 2px #404040; }
.window { position: absolute; display: flex; flex-direction: column; background: #d4d0c8; border: 1px solid; border-color: #e8e6e0 #404040 #404040 #e8e6e0; box-shadow: inset 1px 1px #fff, inset -1px -1px #808080; padding: 2px 3px 4px; }
.w1 { left: 200px; top: 67px; width: 914px; }
.w2 { left: 961px; top: 69px; right: -8px; padding-bottom: 3px; }
.wtitle { display: flex; align-items: center; gap: 2px; height: 18px; margin-bottom: 2px; padding-left: 2px; color: #fff; background: linear-gradient(90deg, #0a246a, #a6caf0); }
.w2 .wtitle { color: #d4d0c8; padding-left: 1px; background: linear-gradient(90deg, #808080, #c0c0c0); }
.pane { position: relative; overflow: hidden; border: solid #505050; border-width: 1px 0 0 2px; background: #fff; }
.w1 .pane { height: 647px; }
.w2 .pane { height: 668px; border-left-width: 1px; }

.sheet { table-layout: fixed; border-collapse: separate; border-spacing: 0; font-size: 16px; line-height: 18px; }
.sheet th, .sheet td { padding: 0; white-space: nowrap; }
.sheet th { font-weight: normal; background: #d4d0c8; border: solid #808080; border-width: 0 1px 1px 0; vertical-align: bottom; text-align: center; }
.sheet .heads th { height: 19px; }
.sheet th.sel { background: #b4bad2; border-color: #0a246a; }
.rh { width: 34px; }
.s1 { width: 900px; }
.ca { width: 149px; } .cb { width: 549px; } .cc { width: 168px; }
.s1 tr { height: 19px; }
.s1 .tall { height: 29px; }
.s1 td { border: solid #000; border-width: 0 2px 1px 0; padding-left: 1px; text-align: left; vertical-align: bottom; }
.s1 td:last-child { border: solid #c0c0c0; border-width: 0 0 1px; }
.s1 .big { font-size: 24px; line-height: 28px; padding-left: 4px; }
.s1 .tick { padding-left: 3px; }
.s1 td.cur { position: relative; font-size: 25px; }
.selbox { position: absolute; inset: 0; border: 1px solid #000; box-shadow: -1px 0 0 1px #fff, 0 0 0 2px #000; }
.selbox::after { content: ""; position: absolute; right: -4px; bottom: -4px; width: 6px; height: 6px; background: #000; border: 1px solid #fff; }

.s2 { width: 1000px; }
.a { width: 58px; } .b { width: 37px; } .c { width: 89px; } .d { width: 115px; } .e { width: 138px; } .f { width: 74px; } .g { width: 88px; } .h { width: 89px; } .i { width: 139px; } .j { width: 139px; }
.s2 td { border: solid #000; border-width: 0 1px 1px 0; padding: 0 1px 2px 0; text-align: center; vertical-align: middle; font-weight: bold; font-size: 17px; line-height: 19px; }
.r30 { height: 30px; } .r32 { height: 32px; } .r33 { height: 33px; } .r34 { height: 34px; } .r40 { height: 40px; } .r45 { height: 45px; }
.s2 .title { font-size: 25px; line-height: 28px; padding: 0; }
.s2 .thin { font-weight: normal; font-size: 16px; }
.s2 .blue { color: #0000d8; }
.s2 .note { text-align: left; padding-left: 2px; font-size: 14px; }
.note span { font: bold 13px/18px "Liberation Mono", monospace; white-space: pre; }
.s2 .attach { text-align: left; padding-left: 31px; }
.s2 .link { text-align: left; padding-left: 2px; font-weight: normal; font-size: 16px; }
.link a { color: #800080; }
.s2 .proc { vertical-align: top; padding-top: 62px; }
.export { position: absolute; left: 806px; top: 19px; width: 136px; height: 27px; background: #d4d0c8; border: solid #505050; border-width: 0 2px 2px 0; color: #c2c2e6; font-size: 16px; line-height: 24px; padding-right: 4px; }

.tabs { display: flex; align-items: stretch; height: 15px; padding-left: 1px; box-shadow: inset 0 1px #808080; }
.w2 .tabs { height: 16px; padding-left: 0; }
.nav { width: 15px; display: flex; align-items: center; justify-content: center; }
.nav svg { width: 8px; height: 8px; }
.edge { width: 10px; height: 15px; flex: none; }
.tab { display: flex; font-size: 12px; line-height: 14px; }
.w2 .tab { font-size: 14px; }
.tab span { border-bottom: 1px solid #808080; height: 15px; }
.w2 .tab span { width: 43px; }
.tab.active span { background: #fff; border-color: #000; }
.hscroll { display: flex; flex: 1; margin-left: 417px; padding-top: 1px; }
.split { width: 6px; border: solid; border-width: 0 2px 0 1px; border-color: #fff #404040 #fff #fff; }
.hscroll button { width: 16px; border: 1px solid; border-color: #fff #606060 #606060 #fff; display: flex; align-items: center; justify-content: center; }
.hscroll svg { width: 8px; height: 8px; }
.track { flex: 1; margin-left: 1px; border: solid #fff; border-width: 1px 0 0 1px; }

.callout { position: absolute; left: 418px; top: 26px; width: 270px; height: 83px; border: 3px solid #0000e0; background: #fff; color: #dc1478; font-size: 17px; line-height: 16px; font-weight: bold; text-align: center; padding: 5px 2px 0 0; white-space: nowrap; }
.mark { position: absolute; border: 2px solid #d42020; box-shadow: 2px 3px 4px rgba(0, 0, 0, .5), inset 2px 2px 4px rgba(0, 0, 0, .25); }
.m1 { left: 232px; top: 524px; width: 321px; height: 29px; }
.m2 { left: 1072px; top: 422px; width: 367px; height: 37px; }
.arrows { position: absolute; left: 0; top: 0; width: 1200px; height: 600px; pointer-events: none; }

.drawrow { padding: 1px 2px; height: 30px; border-top: 2px solid #fff; background: linear-gradient(90deg, #d7d3cb, #f5f4f2 740px); }
.txt { white-space: nowrap; padding-left: 3px; }
.sep + .txt { padding-left: 5px; }
.txt + .drop { width: 12px; }
.drawrow .cap { margin-left: 2px; }
.status { height: 21px; display: flex; align-items: center; padding: 0 9px 3px 10px; gap: 4px; border-bottom: 3px solid #d4d0c8; box-shadow: inset 0 -1px #fff; }
.ready { margin-right: auto; }
.status i, .status .p28 { height: 14px; border: 1px solid #e2dfd9; line-height: 13px; text-align: center; }
.status .p28 { width: 28px; }
.p34 { width: 34px; } .p112 { width: 112px; } .p52 { width: 52px; }
```
